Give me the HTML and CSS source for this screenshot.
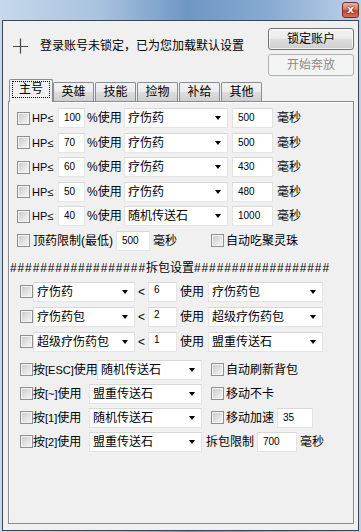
FILE: index.html
```html
<!DOCTYPE html>
<html lang="zh-CN">
<head>
<meta charset="utf-8">
<title>设置</title>
<link rel="stylesheet" href="styles.css">
</head>
<body>
<div class="window">
  <div class="titlebar">
    <div class="close">x</div>
  </div>
  <div class="client">
    <div class="header">
      <div class="msg">
        <svg class="plus" width="15" height="16" viewBox="0 0 15 16"><path d="M7.5 0.5V15.5M0 8.5H15" stroke="#4a4a4a" stroke-width="1.2" fill="none"/></svg>
        <span>登录账号未锁定，已为您加载默认设置</span>
      </div>
      <div class="btns">
        <div class="btn">锁定账户</div>
        <div class="btn disabled">开始奔放</div>
      </div>
    </div>

    <div class="tabstrip">
      <div class="tab active"><span class="focus">主号</span></div>
      <div class="tab first">英雄</div>
      <div class="tab">技能</div>
      <div class="tab">捡物</div>
      <div class="tab">补给</div>
      <div class="tab">其他</div>
    </div>

    <div class="panel">
      <div class="group g1">
        <div class="row">
          <span class="cb"></span><span class="hp">HP≤</span><span class="num w27">100</span><span class="pct">%使用</span><span class="sel w104">疗伤药</span><span class="num w41 ml4">500</span><span class="ml4">毫秒</span>
        </div>
        <div class="row">
          <span class="cb"></span><span class="hp">HP≤</span><span class="num w27">70</span><span class="pct">%使用</span><span class="sel w104">疗伤药</span><span class="num w41 ml4">500</span><span class="ml4">毫秒</span>
        </div>
        <div class="row">
          <span class="cb"></span><span class="hp">HP≤</span><span class="num w27">60</span><span class="pct">%使用</span><span class="sel w104">疗伤药</span><span class="num w41 ml4">430</span><span class="ml4">毫秒</span>
        </div>
        <div class="row">
          <span class="cb"></span><span class="hp">HP≤</span><span class="num w27">50</span><span class="pct">%使用</span><span class="sel w104">疗伤药</span><span class="num w41 ml4">480</span><span class="ml4">毫秒</span>
        </div>
        <div class="row">
          <span class="cb"></span><span class="hp">HP≤</span><span class="num w27">40</span><span class="pct">%使用</span><span class="sel w104">随机传送石</span><span class="num w41 ml4">1000</span><span class="ml4">毫秒</span>
        </div>
        <div class="row">
          <span class="cb"></span><span class="t-limit">顶药限制(最低)</span><span class="num w34">500</span><span class="t-ms">毫秒</span><span class="cb"></span><span class="ml2">自动吃聚灵珠</span>
        </div>
      </div>

      <div class="row sep"><span class="hash">##################</span><span>拆包设置</span><span class="hash">##################</span></div>

      <div class="group g2">
        <div class="row ind">
          <span class="cb"></span><span class="sel w102">疗伤药</span><span class="lt">&lt;</span><span class="num w29 top">6</span><span class="use">使用</span><span class="sel w115">疗伤药包</span>
        </div>
        <div class="row ind">
          <span class="cb"></span><span class="sel w102">疗伤药包</span><span class="lt">&lt;</span><span class="num w29 top">2</span><span class="use">使用</span><span class="sel w115">超级疗伤药包</span>
        </div>
        <div class="row ind">
          <span class="cb"></span><span class="sel w102">超级疗伤药包</span><span class="lt">&lt;</span><span class="num w29 top">1</span><span class="use">使用</span><span class="sel w115">盟重传送石</span>
        </div>
      </div>

      <div class="group g3">
        <div class="row ind">
          <span class="cb"></span><span class="key wide">按<span class="lat">[ESC]</span>使用</span><span class="sel w105">随机传送石</span><span class="cb ml9"></span><span class="ml2">自动刷新背包</span>
        </div>
        <div class="row ind">
          <span class="cb"></span><span class="key">按<span class="lat">[~]</span>使用</span><span class="sel w113">盟重传送石</span><span class="cb ml9"></span><span class="ml2">移动不卡</span>
        </div>
        <div class="row ind">
          <span class="cb"></span><span class="key">按<span class="lat">[1]</span>使用</span><span class="sel w113">随机传送石</span><span class="cb ml9"></span><span class="ml2 w51">移动加速</span><span class="num w36">35</span>
        </div>
        <div class="row ind">
          <span class="cb"></span><span class="key">按<span class="lat">[2]</span>使用</span><span class="sel w113">盟重传送石</span><span class="ml4 w51">拆包限制</span><span class="num w40">700</span><span class="ml3">毫秒</span>
        </div>
      </div>
    </div>
  </div>
</div>
</body>
</html>
```
FILE: styles.css
```css
* { box-sizing: border-box; }
html, body { margin: 0; padding: 0; }
body {
  width: 361px;
  height: 532px;
  overflow: hidden;
  font-family: "Liberation Sans", "Noto Sans CJK SC", sans-serif;
  font-size: 12px;
  color: #000;
}
.window {
  width: 361px;
  height: 532px;
  display: flex;
  flex-direction: column;
  padding: 0 2px 1px 2px;
  background: linear-gradient(to right, #c6d8eb 0%, #a8c2de 28%, #6f97c3 52%, #87aad0 74%, #bdd1e7 100%);
}
.titlebar {
  height: 20px;
  flex: none;
  display: flex;
  justify-content: flex-end;
  align-items: flex-start;
  padding-top: 2px;
}
.close {
  width: 17px;
  height: 16px;
  border: 1px solid #7b2d25;
  border-radius: 3px;
  background: linear-gradient(#eab0a2 0%, #d97a67 45%, #c5432f 55%, #d6705a 100%);
  color: #fff;
  font: bold 11px "DejaVu Sans", sans-serif;
  line-height: 13px;
  text-align: center;
  text-shadow: 0 0 2px #4a120c, 0 0 1px #4a120c;
}
.client {
  flex: 1;
  display: flex;
  flex-direction: column;
  background: #f0f0f0;
  border: 1px solid #3c4652;
}
.header {
  flex: none;
  display: flex;
  justify-content: space-between;
  align-items: flex-start;
  padding: 7px 4px 0 10px;
}
.msg {
  display: flex;
  align-items: center;
  gap: 12px;
  height: 16px;
  margin-top: 10px;
  line-height: 16px;
}
.plus { display: block; }
.btns {
  display: flex;
  flex-direction: column;
  gap: 4px;
}
.btn {
  width: 86px;
  height: 22px;
  border: 1px solid #707070;
  border-radius: 3px;
  background: linear-gradient(#f2f2f2 0%, #ebebeb 50%, #dddddd 51%, #cfcfcf 100%);
  box-shadow: inset 0 0 0 1px rgba(255,255,255,0.7);
  display: flex;
  align-items: center;
  justify-content: center;
  line-height: 20px;
}
.btn.disabled {
  border-color: #adb2b5;
  background: #f4f4f4;
  box-shadow: none;
  color: #8a8a8a;
}
.tabstrip {
  flex: none;
  display: flex;
  align-items: flex-end;
  height: 22px;
  margin: 3px 4px 0 5px;
  padding-left: 1px;
}
.tab {
  width: 41px;
  height: 19px;
  margin-left: 1px;
  border: 1px solid #898c95;
  border-bottom: none;
  border-radius: 2px 2px 0 0;
  background: linear-gradient(#f2f2f2 0%, #ebebeb 50%, #dddddd 51%, #cfcfcf 100%);
  text-align: center;
  line-height: 18px;
}
.tab.first { margin-left: 0; }
.tab.active {
  width: 44px;
  height: 23px;
  margin-left: 0;
  margin-bottom: -1px;
  position: relative;
  z-index: 1;
  background: #f1f1f1;
  display: flex;
  justify-content: center;
  padding-top: 1px;
}
.focus {
  display: block;
  width: 38px;
  height: 17px;
  line-height: 15px;
  border: 1px dotted #000;
  text-align: center;
}
.panel {
  flex: 1;
  margin: 0 4px 6px 5px;
  border: 1px solid #898c95;
  background: #f0f0f0;
  box-shadow: inset 1px 1px 0 #fff;
  padding: 6px 8px 0 8px;
  display: flex;
  flex-direction: column;
}
.group { display: flex; flex-direction: column; }
.g1 { gap: 4.6px; }
.g2 { gap: 5px; margin-top: 4px; }
.g3 { gap: 4px; margin-top: 8px; }
.row {
  display: flex;
  align-items: center;
  height: 20px;
  line-height: 20px;
  white-space: nowrap;
}
.row.ind { padding-left: 3px; }
.row.sep { margin-top: 7px; margin-left: -7px; }
.hash {
  font-size: 12px;
  letter-spacing: 0.88px;
  color: #000;
}
.cb {
  flex: none;
  width: 13px;
  height: 13px;
  border: 1px solid #8e8f8f;
  background: linear-gradient(135deg, #c4c6c9 0%, #e6e6e7 60%, #f4f4f4 100%);
  box-shadow: inset 0 0 0 1px #f4f4f4;
}
.hp {
  width: 26px;
  margin-left: 2px;
  font-size: 11px;
}
.pct { width: 37px; margin-left: 2px; }
.num {
  flex: none;
  height: 20px;
  background: #fff;
  border: 1px solid #e4e4e4;
  border-top-color: #d8d8d8;
  font-size: 10px;
  line-height: 18px;
  padding-left: 5px;
}
.num.top { line-height: 14px; }
.sel {
  flex: none;
  height: 20px;
  display: flex;
  align-items: center;
  justify-content: space-between;
  background: #fff;
  border: 1px solid #e4e4e4;
  border-top-color: #d8d8d8;
  padding: 0 6px 0 3px;
  line-height: 18px;
}
.sel::after {
  content: "";
  width: 0;
  height: 0;
  border-left: 3px solid transparent;
  border-right: 3px solid transparent;
  border-top: 4px solid #000;
}
.w27 { width: 27px; }
.w29 { width: 29px; }
.w34 { width: 34px; }
.w36 { width: 36px; }
.w40 { width: 40px; }
.w41 { width: 41px; }
.w51 { width: 51px; }
.w102 { width: 102px; }
.w104 { width: 104px; }
.w105 { width: 105px; }
.w113 { width: 113px; }
.w115 { width: 115px; }
.ml2 { margin-left: 2px; }
.ml3 { margin-left: 3px; }
.ml4 { margin-left: 4px; }
.ml9 { margin-left: 9px; }
.t-limit { width: 83px; margin-left: 3px; }
.t-ms { width: 58px; margin-left: 3px; }
.lt { width: 10px; margin-left: 3px; line-height: 16px; }
.use { width: 28px; margin-left: 3px; }
.key { width: 56px; }
.key.wide { width: 64px; }
.lat { font-size: 11px; }
```
